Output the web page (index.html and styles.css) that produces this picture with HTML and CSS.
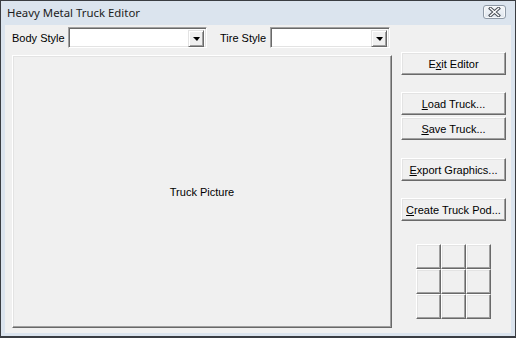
FILE: index.html
```html
<!DOCTYPE html>
<html>
<head>
<meta charset="utf-8">
<title>Heavy Metal Truck Editor</title>
<link rel="stylesheet" href="styles.css">
</head>
<body>
<div class="window">
  <div class="titlebar">
    <span class="title">Heavy Metal Truck Editor</span>
    <span class="close">
      <svg width="17" height="10" viewBox="0 0 17 10">
        <path d="M4.5 1.5 L12.5 8.5 M12.5 1.5 L4.5 8.5" stroke="#4a4f57" stroke-width="3.4" stroke-linecap="square" fill="none"/>
        <path d="M4.5 1.5 L12.5 8.5 M12.5 1.5 L4.5 8.5" stroke="#ffffff" stroke-width="1.4" stroke-linecap="square" fill="none"/>
      </svg>
    </span>
  </div>
  <div class="client">
    <div class="toolbar">
      <span class="label body-label">Body Style</span>
      <div class="combo combo-body"><span class="drop"><span class="arrow"></span></span></div>
      <span class="label tire-label">Tire Style</span>
      <div class="combo combo-tire"><span class="drop"><span class="arrow"></span></span></div>
    </div>
    <div class="main">
      <div class="picture">Truck Picture</div>
      <div class="side">
        <button class="btn">E<u>x</u>it Editor</button>
        <button class="btn load"><u>L</u>oad Truck...</button>
        <button class="btn save"><u>S</u>ave Truck...</button>
        <button class="btn export"><u>E</u>xport Graphics...</button>
        <button class="btn create"><u>C</u>reate Truck Pod...</button>
        <div class="pad">
          <span class="cell"></span><span class="cell"></span><span class="cell"></span>
          <span class="cell"></span><span class="cell"></span><span class="cell"></span>
          <span class="cell"></span><span class="cell"></span><span class="cell"></span>
        </div>
      </div>
    </div>
  </div>
</div>
</body>
</html>
```
FILE: styles.css
```css
* { box-sizing: border-box; }
html, body { margin: 0; padding: 0; }
body {
  width: 516px;
  height: 338px;
  overflow: hidden;
  font-family: "Liberation Sans", Arial, sans-serif;
  font-size: 11px;
  color: #000;
}
.window {
  width: 516px;
  height: 338px;
  border: 1px solid #3a3d42;
  border-bottom-width: 2px;
  background: #dbe4ee;
  display: flex;
  flex-direction: column;
}
.titlebar {
  height: 24px;
  display: flex;
  align-items: center;
  justify-content: space-between;
  padding: 0 9px 0 6px;
}
.title {
  font-family: "Noto Sans", "Open Sans", sans-serif;
  font-size: 11.4px;
  color: #1c1c1c;
  margin-top: -1px;
}
.close {
  width: 23px;
  height: 14px;
  border: 1px solid #8e99a6;
  border-radius: 3px;
  background: linear-gradient(#f4f7fa, #dfe6ee);
  display: flex;
  align-items: center;
  justify-content: center;
  margin-top: -3px;
  box-shadow: inset 0 0 0 1px #f7f9fb;
}
.client {
  flex: 1;
  margin: 0 4px 3px 4px;
  background: #f0f0f0;
  padding: 2px 5px 0 7px;
  display: flex;
  flex-direction: column;
}
.toolbar {
  display: flex;
  align-items: center;
  height: 21px;
}
.label { white-space: nowrap; }
.body-label { width: 56px; }
.tire-label { width: 50px; margin-left: 13px; }
.combo {
  height: 21px;
  background: #fff;
  border: 1px solid;
  border-color: #a0a0a0 #fff #fff #a0a0a0;
  box-shadow: inset 1px 1px 0 #696969, inset -1px -1px 0 #e3e3e3;
  display: flex;
  justify-content: flex-end;
  padding: 2px;
}
.combo-body { width: 139px; }
.combo-tire { width: 120px; }
.drop {
  width: 16px;
  height: 17px;
  background: #f0f0f0;
  border: 1px solid;
  border-color: #e3e3e3 #696969 #696969 #e3e3e3;
  box-shadow: inset 1px 1px 0 #fff, inset -1px -1px 0 #a0a0a0;
  display: flex;
  align-items: center;
  justify-content: center;
}
.arrow {
  width: 0;
  height: 0;
  border-left: 4px solid transparent;
  border-right: 3px solid transparent;
  border-top: 4px solid #000;
  margin-top: 1px;
}
.main {
  display: flex;
  margin-top: 4px;
  flex: 1;
}
.picture {
  width: 380px;
  height: 273px;
  margin-top: 3px;
  border: 1px solid;
  border-color: #fff #696969 #696969 #fff;
  box-shadow: inset -1px -1px 0 #a0a0a0, inset 1px 1px 0 #e3e3e3;
  display: flex;
  align-items: center;
  justify-content: center;
  background: #f0f0f0;
}
.side {
  width: 105px;
  margin-left: 9px;
  display: flex;
  flex-direction: column;
}
.btn {
  height: 23px;
  width: 105px;
  padding: 0;
  font-family: "Liberation Sans", Arial, sans-serif;
  font-size: 11px;
  color: #000;
  background: #f0f0f0;
  border: 1px solid;
  border-color: #fff #696969 #696969 #fff;
  box-shadow: inset -1px -1px 0 #a0a0a0, inset 1px 1px 0 #e3e3e3;
  border-radius: 0;
}
.btn u { text-underline-offset: 1px; }
.load { margin-top: 17px; }
.save { margin-top: 2px; }
.export { margin-top: 18px; }
.create { margin-top: 17px; }
.pad {
  margin: 23px auto 0;
  display: grid;
  grid-template-columns: repeat(3, 25px);
  grid-template-rows: repeat(3, 25px);
}
.cell {
  border: 1px solid;
  border-color: #fff #696969 #696969 #fff;
  box-shadow: inset -1px -1px 0 #a0a0a0, inset 1px 1px 0 #e3e3e3;
  background: #f0f0f0;
}
```
